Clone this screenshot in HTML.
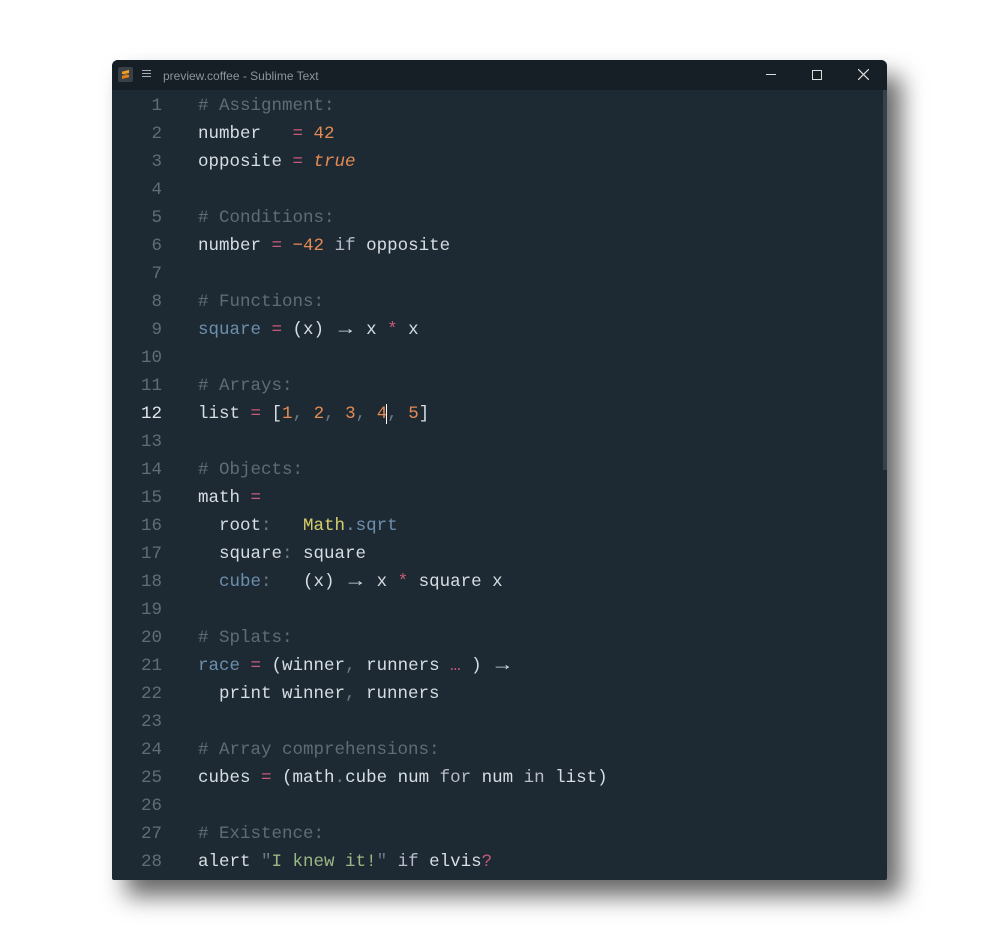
<!DOCTYPE html>
<html><head><meta charset="utf-8"><style>
html,body{margin:0;padding:0;background:#fff;width:1000px;height:940px;overflow:hidden}
.win{position:absolute;left:112px;top:60px;width:775px;height:820px;background:#1e2a33;border-radius:6px 6px 2px 2px;overflow:hidden;box-shadow:14px 16px 24px rgba(0,0,0,0.6)}
.tb{height:30px;background:#161f26;position:relative;font-family:"Liberation Sans",sans-serif;font-size:12px;color:#8a949c}
.tb .t{position:absolute;left:51px;top:9px}
.logo{position:absolute;left:6px;top:7px;width:15px;height:15px;background:#3a3f48;border-radius:2px}
.logo:after{content:"";position:absolute;left:4px;top:3px;width:7px;height:9px;background:linear-gradient(#f8b020,#e07010);clip-path:polygon(0 20%,100% 0,100% 35%,30% 45%,100% 55%,100% 80%,0 100%,0 65%,70% 55%,0 45%)}
.menu{position:absolute;left:30px;top:10px;width:9px;height:1px;background:#aab;box-shadow:0 3px #aab,0 6px #aab}
.ctl{position:absolute;top:8px;color:#fff}
.code{position:absolute;top:33px;left:0;right:0;font-family:"Liberation Mono",monospace;font-size:17.5px;color:#d6dde3}
.ln{position:absolute;left:0;width:50px;text-align:right;color:#5f6d76}
.l{position:absolute;left:86px;white-space:pre}
.c{color:#5e6c76}.o{color:#c85a78}.n{color:#e58a52}.k{color:#6d8fae}.kw{color:#b9b9cc}.y{color:#d6cf6a}.s{color:#9ab883}.d{color:#6b7a84}
.a{display:inline-block;width:21px;text-align:center;transform:scaleX(1.3)}
.sb{position:absolute;right:0;top:30px;width:4px;height:380px;background:#34424c}
</style></head><body>
<div class="win">
<div class="tb"><div class="logo"></div><div class="menu"></div><span class="t">preview.coffee - Sublime Text</span>
<span class="ctl" style="left:654px;top:14px;width:10px;height:1px;background:#ddd"></span>
<span class="ctl" style="left:700px;top:10px;width:8px;height:8px;border:1px solid #ddd"></span>
<svg class="ctl" style="left:746px;top:9px" width="11" height="11"><path d="M0 0L11 11M11 0L0 11" stroke="#ddd" stroke-width="1.2"/></svg>
</div>
<div class="sb"></div>
<div class="code" id="c"></div>
</div>
<script>
var A='<span class="a">→</span>';
var L=[
'<span class="c"># Assignment:</span>',
'number   <span class="o">=</span> <span class="n">42</span>',
'opposite <span class="o">=</span> <i class="n">true</i>',
'',
'<span class="c"># Conditions:</span>',
'number <span class="o">=</span> <span class="n">−42</span> <span class="kw">if</span> opposite',
'',
'<span class="c"># Functions:</span>',
'<span class="k">square</span> <span class="o">=</span> (x) '+A+' x <span class="o">*</span> x',
'',
'<span class="c"># Arrays:</span>',
'list <span class="o">=</span> [<span class="n">1</span><span class="d">,</span> <span class="n">2</span><span class="d">,</span> <span class="n">3</span><span class="d">,</span> <span class="n">4</span><span style="border-left:1.5px solid #fff;margin-left:-1px"></span><span class="d">,</span> <span class="n">5</span>]',
'',
'<span class="c"># Objects:</span>',
'math <span class="o">=</span>',
'  root<span class="d">:</span>   <span class="y">Math</span><span class="k">.sqrt</span>',
'  square<span class="d">:</span> square',
'  <span class="k">cube</span><span class="d">:</span>   (x) '+A+' x <span class="o">*</span> square x',
'',
'<span class="c"># Splats:</span>',
'<span class="k">race</span> <span class="o">=</span> (winner<span class="d">,</span> runners <span class="o">…</span> ) '+A,
'  print winner<span class="d">,</span> runners',
'',
'<span class="c"># Array comprehensions:</span>',
'cubes <span class="o">=</span> (math<span class="d">.</span>cube num <span class="kw">for</span> num <span class="kw">in</span> list)',
'',
'<span class="c"># Existence:</span>',
'alert <span class="d">"</span><span class="s">I knew it!</span><span class="d">"</span> <span class="kw">if</span> elvis<span class="o">?</span>'];
var h='';for(var i=0;i<L.length;i++){var t=i*28+3;h+='<div class="ln" style="top:'+t+'px;'+(i==11?'color:#dfe5ea':'')+'">'+(i+1)+'</div><div class="l" style="top:'+t+'px">'+L[i]+'</div>';}
document.getElementById('c').innerHTML=h;
</script>
</body></html>
